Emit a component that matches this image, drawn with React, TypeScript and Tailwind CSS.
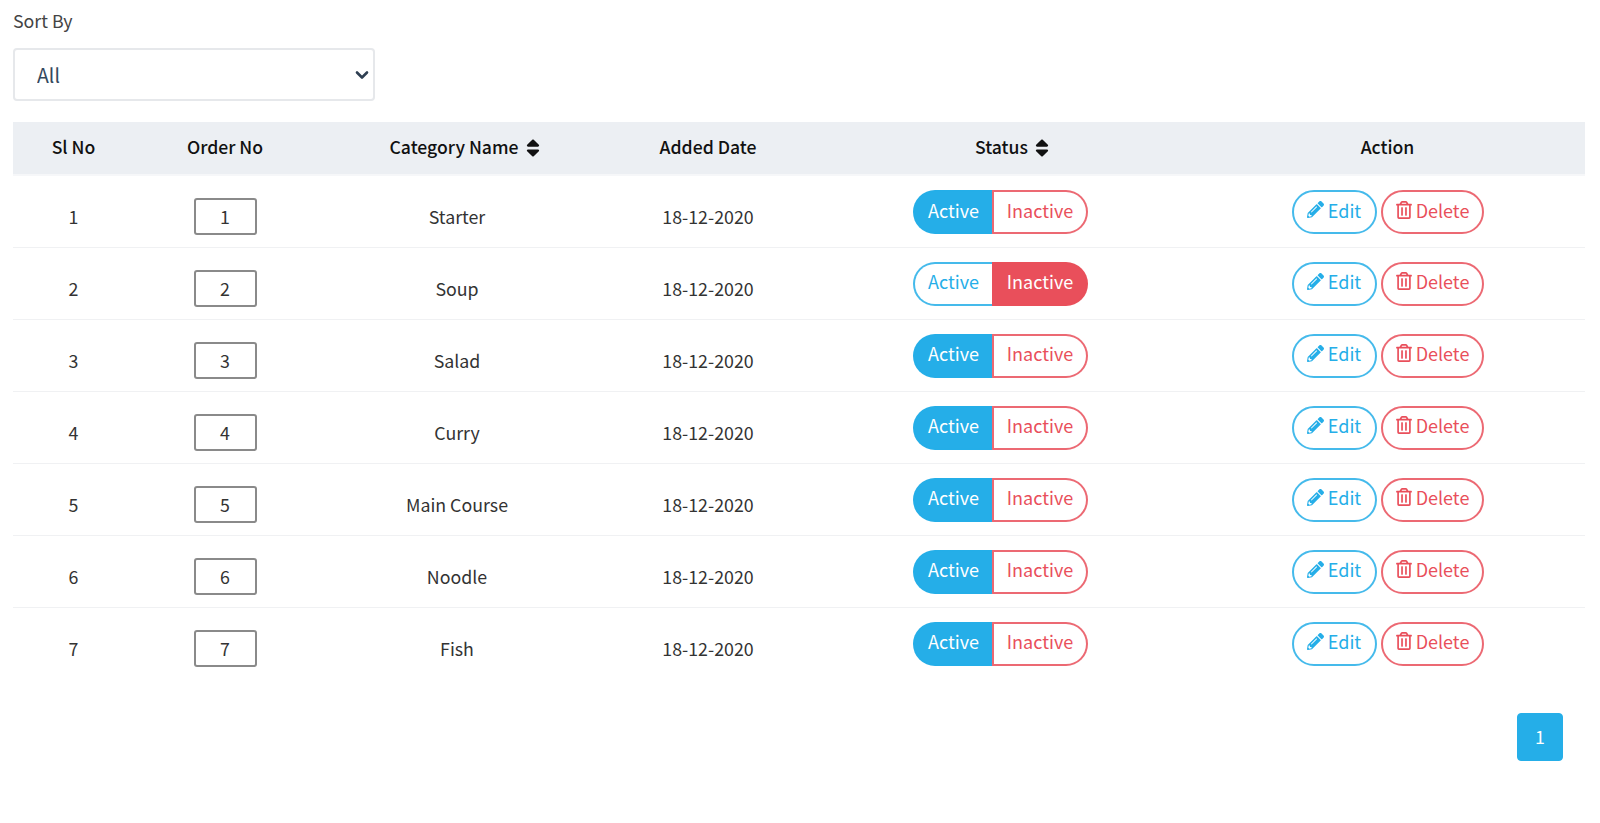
import React from 'react';
import { FaSort, FaPencilAlt, FaRegTrashAlt } from 'react-icons/fa';

const rows = [
  { id: 1, name: 'Starter', active: true },
  { id: 2, name: 'Soup', active: false },
  { id: 3, name: 'Salad', active: true },
  { id: 4, name: 'Curry', active: true },
  { id: 5, name: 'Main Course', active: true },
  { id: 6, name: 'Noodle', active: true },
  { id: 7, name: 'Fish', active: true },
];

const SortIcon = () => (
  <FaSort className="absolute left-full top-1/2 ml-[3px] mt-[2px] -translate-y-1/2 text-[22px] text-[#111]" />
);

const StatusToggle = ({ active }: { active: boolean }) => (
  <div className="inline-flex h-[44px] text-[18px] leading-none">
    <span
      className={
        'flex w-[79px] items-center justify-center rounded-l-full border-[2px] border-r-0 border-[#25aee8]/85 pb-[5px] ' +
        (active ? 'bg-[#25aee8] text-white' : 'bg-white text-[#25aee8]')
      }
    >
      Active
    </span>
    <span
      className={
        'flex w-[96px] items-center justify-center rounded-r-full border-[2px] border-[#e94f5b]/85 pb-[5px] ' +
        (active ? 'bg-white text-[#e94f5b]' : 'bg-[#e94f5b] text-white')
      }
    >
      Inactive
    </span>
  </div>
);

const ActionButtons = () => (
  <div className="inline-flex h-[44px] gap-[4px] text-[18px] leading-none">
    <span className="flex w-[85px] items-center justify-center gap-[4px] rounded-full border-[2px] border-[#25aee8]/85 pb-[5px] text-[#25aee8]">
      <FaPencilAlt className="text-[17px]" />
      Edit
    </span>
    <span className="flex w-[103px] items-center justify-center gap-[3px] rounded-full border-[2px] border-[#e94f5b]/85 pb-[5px] text-[#e94f5b]">
      <FaRegTrashAlt className="text-[18px]" />
      Delete
    </span>
  </div>
);

export default function App() {
  return (
    <div className="h-[823px] overflow-hidden bg-white pl-[13px] pr-[15px] font-['Noto_Sans_CJK_JP',sans-serif] text-[17.8px] text-[#333]">
      <div className="pt-[7px] leading-[26px] text-[#444]">Sort By</div>
      <div className="relative mt-[15px] w-[362px]">
        <select className="block h-[53px] w-full appearance-none rounded-[4px] border-2 border-[#e6e8eb] bg-white pl-[22px] pr-[4px] text-[19.5px] text-[#34495e]">
          <option>All</option>
        </select>
        <svg viewBox="0 0 14 10" className="pointer-events-none absolute right-[6px] top-1/2 h-[10px] w-[14px] -translate-y-1/2" fill="none" stroke="#2f3f52" strokeWidth="2.6" strokeLinecap="round" strokeLinejoin="round">
          <path d="M2 2.5 L7 7.5 L12 2.5" />
        </svg>
      </div>

      <table className="mt-[21px] w-[1572px] table-fixed border-collapse">
        <colgroup>
          <col className="w-[121px]" />
          <col className="w-[182px]" />
          <col className="w-[282px]" />
          <col className="w-[220px]" />
          <col className="w-[365px]" />
          <col />
        </colgroup>
        <thead>
          <tr className="h-[53px] border-b-2 border-[#f6f7f9] bg-[#eceff3] text-[17.6px] text-[#111]">
            <th className="pb-[2px] font-medium">Sl No</th>
            <th className="pb-[2px] font-medium">Order No</th>
            <th className="pb-[2px] pr-[6px] font-medium">
              <span className="relative">Category Name<SortIcon /></span>
            </th>
            <th className="pb-[2px] font-medium">Added Date</th>
            <th className="pb-[2px] pl-[2px] font-medium">
              <span className="relative">Status<SortIcon /></span>
            </th>
            <th className="pb-[2px] pl-[7px] font-medium">Action</th>
          </tr>
        </thead>
        <tbody>
          {rows.map((row) => (
            <tr key={row.id} className="h-[72px] border-b border-[#f0f1f3] text-center last:border-b-0">
              <td className="pt-[10px]">{row.id}</td>
              <td className="pt-[10px]">
                <input
                  readOnly
                  value={row.id}
                  className="mx-auto block h-[37px] w-[63px] rounded-[3px] border-2 border-[#767676]/85 bg-white text-center text-[#333]"
                />
              </td>
              <td className="pt-[10px]">{row.name}</td>
              <td className="pt-[10px]">18-12-2020</td>
              <td className="align-top pt-[14px]">
                <StatusToggle active={row.active} />
              </td>
              <td className="align-top pl-[7px] pt-[14px]">
                <ActionButtons />
              </td>
            </tr>
          ))}
        </tbody>
      </table>

      <div className="mt-[34px] flex w-[1550px] justify-end">
        <button className="h-[48px] w-[46px] rounded-[4px] border border-[#25aee8] bg-[#25aee8] pb-[2px] text-white">1</button>
      </div>
    </div>
  );
}
